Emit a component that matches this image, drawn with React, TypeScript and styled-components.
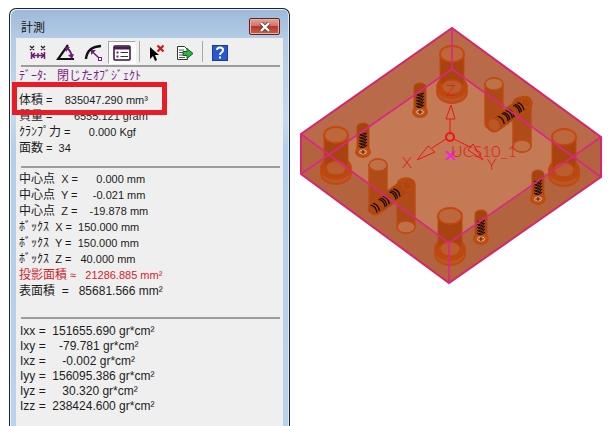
import React from "react";
import styled, { createGlobalStyle } from "styled-components";

const Global = createGlobalStyle`
  * { box-sizing: border-box; }
  html, body, #root { height: 100%; }
  body { margin: 0; background: #fff; overflow: hidden; }
`;

const Page = styled.main`
  display: flex;
  min-height: 100vh;
  padding-left: 9px;
  font-family: "Noto Sans CJK JP", sans-serif;
  font-size: 12px;
  color: #1c1c1c;
`;

const Dialog = styled.section`
  flex: 0 0 281px;
  display: flex;
  flex-direction: column;
  margin-top: 8px;
  padding: 0 6px;
  border: 1px solid #1b2532;
  border-bottom: 0;
  border-radius: 7px 7px 0 0;
  background: linear-gradient(#9db9d8 0, #b4cce6 30px, #c4d9ef 110px, #b5cee9 140px, #bad2ec 100%);
  box-shadow: inset 1px 1px 0 #e9f2fb, inset -1px 0 0 #dcebf9;
`;

const TitleBar = styled.header`
  display: flex;
  align-items: center;
  justify-content: space-between;
  height: 29px;
  padding: 6px 3px 0 5px;
`;

const Title = styled.h1`
  margin: 0;
  font-size: 12px;
  line-height: 16px;
  font-weight: 400;
  color: #111;
`;

const CloseButton = styled.button`
  display: grid;
  place-items: center;
  width: 31px;
  height: 17px;
  padding: 0;
  border: 1px solid #5c2323;
  border-radius: 2px;
  background: linear-gradient(#e2a198 0, #d27468 45%, #b5382a 50%, #c9604c 100%);
  box-shadow: inset 0 0 0 1px #e7b0a6;
`;

const Content = styled.div`
  flex: 1;
  padding: 3px 3px 0;
  background: #efefef;
`;

const Toolbar = styled.div`
  display: flex;
  height: 24px;
  padding-left: 5px;
`;

const ToolButton = styled.button<{ $active?: boolean }>`
  display: grid;
  place-items: center;
  width: 28px;
  height: 23px;
  padding: 0;
  border: 1px solid transparent;
  border-color: ${(p) => (p.$active ? "#a5a5a5 #fff #fff #a5a5a5" : "transparent")};
  background: ${(p) => (p.$active ? "#fbfbfb" : "transparent")};
`;

const ToolDivider = styled.span`
  width: 1px;
  height: 21px;
  margin: 0 3px;
  background: #a8a8a8;
`;

const Rule = styled.hr`
  height: 2px;
  margin: 0 0 0 2px;
  border: 0;
  background: #9c9c9a;
`;

const Heading = styled.p`
  margin: 0;
  line-height: 16px;
  color: #7d1f88;
  white-space: pre;
`;

const Group = styled.div<{ $pad: string }>`
  padding: ${(p) => p.$pad};
`;

const Row = styled.p<{ $alert?: boolean }>`
  position: relative;
  display: flex;
  align-items: baseline;
  height: 16px;
  margin: 0;
  line-height: 16px;
  white-space: pre;
  color: ${(p) => (p.$alert ? "#d2232c" : "inherit")};
`;

const Value = styled.span<{ $large?: boolean }>`
  font-family: "Liberation Sans", "Noto Sans CJK JP", sans-serif;
  font-size: ${(p) => (p.$large ? "12px" : "11px")};
`;

const Inertia = styled.p`
  margin: 0;
  padding-left: 1px;
  font-family: "Liberation Sans", sans-serif;
  font-size: 12px;
  line-height: 15px;
  white-space: pre;
`;

const Marker = styled.span`
  position: absolute;
  z-index: 1;
  inset: -9px auto auto -7px;
  width: 155px;
  height: 33px;
  border: 5px solid #e81c24;
`;

const Viewer = styled.section`
  flex: 1;
  min-width: 0;
`;

const Drawing = styled.svg`
  display: block;
  width: 100%;
`;

const icon = { width: 20, height: 18, viewBox: "0 0 20 18", fill: "none" };

const DistanceIcon = () => (
  <svg {...icon}>
    <path d="M2 2l4 4M6 2L2 6M13 2l4 4M17 2l-4 4" stroke="#222" strokeWidth="1.300" />
    <path d="M3.500 8v7M16.500 8v7M10 9v5M4 11.500h12M7 9l-3 2.500L7 14M13 9l3 2.500-3 2.500" stroke="#6d2077" strokeWidth="1.500" />
  </svg>
);
const AngleIcon = () => (
  <svg {...icon}>
    <path d="M12 1L2 15h16" stroke="#111" strokeWidth="2.200" />
    <path d="M11 4q4 3 5 9" stroke="#6d2077" strokeWidth="2" />
    <path d="M9 3l5 0-4 5zM18 10l-2 5-4-4z" fill="#6d2077" />
  </svg>
);
const RadiusIcon = () => (
  <svg {...icon}>
    <path d="M2 15Q3 3 17 2" stroke="#111" strokeWidth="2.400" />
    <path d="M14.500 13.500L8 7.500" stroke="#6d2077" strokeWidth="1.500" />
    <path d="M7 6h5l-5 5z" fill="#6d2077" />
    <rect x="14.500" y="13.500" width="3" height="3" fill="#fff" stroke="#6d2077" />
  </svg>
);
const ListIcon = () => (
  <svg {...icon}>
    <rect x="2" y="2" width="16" height="14" rx="1" fill="#fff" stroke="#2c1431" strokeWidth="1.500" />
    <path d="M2 4h16" stroke="#4b1c55" strokeWidth="3" />
    <path d="M4.500 8.500h2M4.500 12.500h2" stroke="#6d2077" strokeWidth="2" />
    <path d="M8.500 8.500H16M8.500 12.500H16" stroke="#333" />
  </svg>
);
const DeselectIcon = () => (
  <svg {...icon}>
    <path d="M3 3v12l3-3 2 5 2-1-2-5h4z" fill="#050505" />
    <path d="M10.500 1.500l6 6M16.500 1.500l-6 6" stroke="#c51a20" strokeWidth="2.200" />
  </svg>
);
const ExportIcon = () => (
  <svg {...icon}>
    <path d="M2.500 2.500h7l3 3v10h-10z" fill="#fff" stroke="#333" />
    <path d="M4 6h5M4 8.500h4M4 11h4M4 13.500h6" stroke="#555" />
    <path d="M8 7.500h4v-3l6 5-6 5v-3H8z" fill="#2eb34a" stroke="#0e5c20" />
  </svg>
);
const HelpIcon = () => (
  <svg {...icon}>
    <rect x="2.500" y="1.500" width="15" height="15" fill="#2858cf" stroke="#173c9d" />
    <path d="M7 6q0-2.500 3-2.500t3 2.500q0 1.500-1.500 2.500T10 11M10 12.500v2" stroke="#fff" strokeWidth="2" />
  </svg>
);

const Bore = ({ x, y }: { x: number; y: number }) => (
  <g stroke="#c5470c" strokeWidth="1.800">
    <ellipse cx={x} cy={y + 38} rx="15" ry="11" fill="#b5592c" />
    <ellipse cx={x} cy={y + 33} rx="15" ry="11" fill="#ad4c18" />
    <path d={`M${x - 12} ${y}v30h24v-30z`} fill="#a7430e" stroke="none" />
    <path d={`M${x - 12} ${y}v30M${x + 12} ${y}v30`} strokeWidth="1" />
    <ellipse cx={x} cy={y} rx="12" ry="8" fill="#bd673c" />
    <ellipse cx={x} cy={y + 35} rx="12" ry="8" fill="none" strokeWidth="1.400" />
    <ellipse cx={x} cy={y + 33} rx="10" ry="7" fill="#bd673c" fillOpacity=".7" strokeWidth="1.400" />
  </g>
);

const Screw = ({ x, y }: { x: number; y: number }) => (
  <g>
    <path d={`M${x - 6} ${y + 4}a6 4 0 0 1 12 0v25h-12z`} fill="#a7430e" stroke="#b94a10" />
    <ellipse cx={x} cy={y + 29} rx="7" ry="5" fill="#b9541f" stroke="#c3480c" strokeWidth="2" />
    {[11, 14, 17, 20, 23].map((d) => (
      <path key={d} d={`M${x - 4} ${y + d}q4 4 8-1M${x - 3} ${y + d + 1}l6-2`} fill="none" stroke="#1c0f0a" />
    ))}
    <ellipse cx={x} cy={y + 29} rx="3.500" ry="2" fill="none" stroke="#e5b18a" />
    <path d={`M${x} ${y + 27}v4`} stroke="#3a1a08" />
  </g>
);

const Pin = ({ x, top, bottom, open }: { x: number; top: number; bottom: number; open: "top" | "bottom" }) => (
  <g stroke="#bd4b12" strokeWidth="1.400">
    <path d={`M${x - 9} ${top}a9 6 0 0 1 18 0V${bottom}a9 6 0 0 1-18 0z`} fill="#aa430d" fillOpacity=".85" />
    <ellipse cx={x} cy={open === "top" ? top : bottom} rx="9" ry="6" fill="#c07148" />
  </g>
);

const CrossScrew = ({ x, y, coils, head }: { x: number; y: number; coils: number[]; head?: boolean }) => (
  <g transform={`translate(${x} ${y}) rotate(-35)`}>
    <rect x="-7" y="-7" width="52" height="14" rx="7" fill="#ae460f" stroke="#bc4b12" />
    {head && <ellipse cx="0" cy="0" rx="5" ry="6" fill="#b7592a" stroke="#c9500f" />}
    <ellipse cx="39" cy="0" rx="4" ry="5" fill="none" stroke="#c9500f" />
    {coils.map((d) => (
      <path key={d} d={`M${d} -5q4 4 1 10`} fill="none" stroke="#140b08" strokeWidth="1.300" />
    ))}
  </g>
);

const Model = () => (
  <Drawing viewBox="290 0 325 426" role="img" aria-label="UCS10_1">
    <path d="M452 28L601 137V177L449 283L301 174V134Z" fill="#b96b49" />
    <path d="M452 69L601 177L449 283L301 174Z" fill="#b8683f" />
    <path d="M301 134L449 243L601 137V177L449 283L301 174Z" fill="#b3643f" />
    <path d="M452 69L574 156L449 243L328 154Z" fill="#c37a55" />
    <Bore x={452} y={54} />
    <Bore x={336} y={135} />
    <Bore x={564} y={137} />
    <Bore x={450} y={216} />
    <Screw x={420} y={83} />
    <Screw x={363} y={123} />
    <Screw x={538} y={170} />
    <Screw x={481} y={210} />
    <Pin x={494} top={84} bottom={124} open="top" />
    <Pin x={522} top={103} bottom={146} open="bottom" />
    <CrossScrew x={494} y={125} head coils={[8, 13, 15, 18, 20, 27, 29, 32]} />
    <Pin x={378} top={165} bottom={202} open="top" />
    <Pin x={406} top={184} bottom={227} open="bottom" />
    <CrossScrew x={375} y={208} coils={[-2, 1, 8, 10, 13, 21, 23, 26]} />
    <g fill="none" stroke="#d6246f" strokeWidth="2">
      <path d="M452 28L601 137V177L449 283L301 174V134Z" />
      <path d="M301 134L449 243L601 137M449 243V283" stroke="#dc2588" strokeWidth="1.600" />
      <path d="M301 174L452 69L601 177M452 28V69" stroke="#dc2588" strokeWidth="1.600" />
    </g>
    <g fill="none" stroke="#f01414">
      <circle cx="450" cy="137" r="4" strokeWidth="2" />
      <path d="M450 132V119M446 119h9l-4-14z" />
      <path d="M446 139L432 148M417 160l11-14 7 6z" />
      <path d="M454 139L470 147M483 160l-15-10 5-6z" />
    </g>
    <path d="M446 151l9 9M455 151l-9 9" stroke="#f321e8" strokeWidth="2" />
    <g fill="#e01818" fontFamily="Lato, Liberation Sans, sans-serif" fontWeight="300" fontSize="16">
      <text x="446" y="96">Z</text>
      <text x="402" y="168">X</text>
      <text x="487" y="170">Y</text>
      <text x="451" y="157">UCS10_1</text>
    </g>
  </Drawing>
);

const tools = [
  { label: "距離", Icon: DistanceIcon },
  { label: "角度", Icon: AngleIcon },
  { label: "半径", Icon: RadiusIcon },
  { label: "一覧", Icon: ListIcon, active: true },
  null,
  { label: "選択解除", Icon: DeselectIcon },
  { label: "出力", Icon: ExportIcon },
  null,
  { label: "ヘルプ", Icon: HelpIcon },
];

const mass = [
  ["質量", " =       6555.121 gram"],
  ["ｸﾗﾝﾌﾟ力", " =      0.000 Kgf"],
  ["面数", " =  34"],
];
const box = [
  ["中心点", "  X =      0.000 mm"],
  ["中心点", "  Y =     -0.021 mm"],
  ["中心点", "  Z =    -19.878 mm"],
  ["ﾎﾞｯｸｽ", "  X =  150.000 mm"],
  ["ﾎﾞｯｸｽ", "  Y =  150.000 mm"],
  ["ﾎﾞｯｸｽ", "  Z =   40.000 mm"],
];
const inertia = [
  "Ixx =  151655.690 gr*cm²",
  "Ixy =    -79.781 gr*cm²",
  "Ixz =     -0.002 gr*cm²",
  "Iyy =  156095.386 gr*cm²",
  "Iyz =     30.320 gr*cm²",
  "Izz =  238424.600 gr*cm²",
];

export default function App() {
  return (
    <>
      <Global />
      <Page>
        <Dialog>
          <TitleBar>
            <Title>計測</Title>
            <CloseButton aria-label="閉じる">
              <svg width="12" height="10" viewBox="0 0 12 10">
                <path d="M2 1l8 8M10 1L2 9" stroke="#54423f" strokeWidth="4" />
                <path d="M2 1l8 8M10 1L2 9" stroke="#fff" strokeWidth="2.400" />
              </svg>
            </CloseButton>
          </TitleBar>
          <Content>
            <Toolbar>
              {tools.map((t, i) =>
                t ? (
                  <ToolButton key={i} aria-label={t.label} $active={t.active}>
                    <t.Icon />
                  </ToolButton>
                ) : (
                  <ToolDivider key={i} />
                ),
              )}
            </Toolbar>
            <Rule />
            <Heading>ﾃﾞｰﾀ:    閉じたｵﾌﾞｼﾞｪｸﾄ</Heading>
            <Group $pad="8px 0 11px">
              <Row>
                体積<Value>{" =    835047.290 mm³"}</Value>
                <Marker />
              </Row>
              {mass.map(([label, value]) => (
                <Row key={label}>
                  {label}
                  <Value>{value}</Value>
                </Row>
              ))}
            </Group>
            <Rule />
            <Group $pad="2px 0 19px">
              {box.map(([label, value]) => (
                <Row key={value}>
                  {label}
                  <Value>{value}</Value>
                </Row>
              ))}
              <Row $alert>
                投影面積<Value>{" ≈   21286.885 mm²"}</Value>
              </Row>
              <Row>
                表面積<Value $large>{"  =   85681.566 mm²"}</Value>
              </Row>
            </Group>
            <Rule />
            <Group $pad="5px 0 0">
              {inertia.map((t) => (
                <Inertia key={t}>{t}</Inertia>
              ))}
            </Group>
          </Content>
        </Dialog>
        <Viewer>
          <Model />
        </Viewer>
      </Page>
    </>
  );
}
